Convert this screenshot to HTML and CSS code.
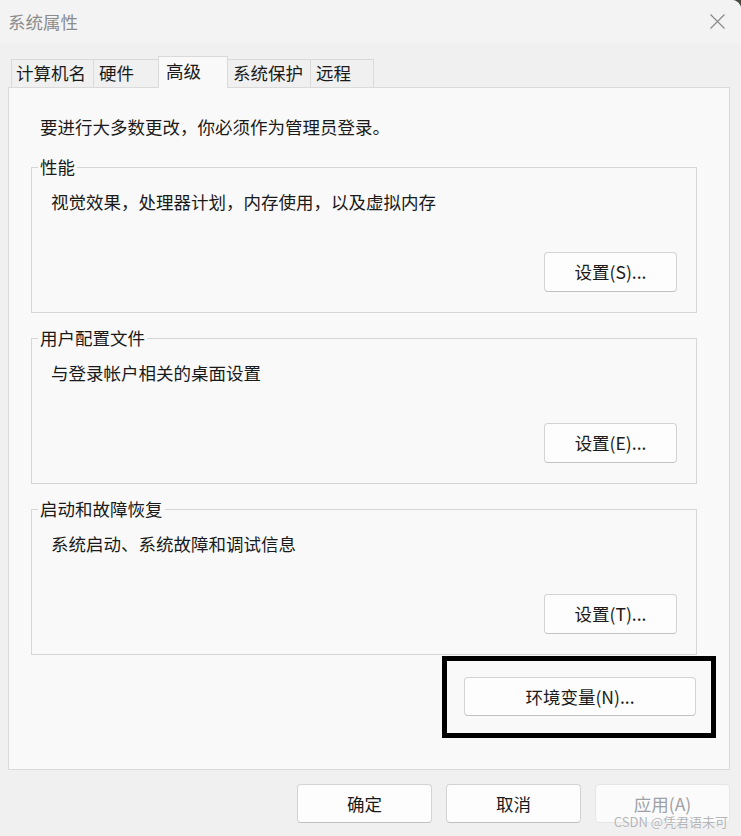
FILE: index.html
```html
<!DOCTYPE html>
<html lang="zh-CN">
  <head>
    <meta charset="UTF-8" />
    <meta name="viewport" content="width=device-width, initial-scale=1.0" />
    <title>系统属性</title>
    <link rel="stylesheet" href="styles.css">
  </head>
  <body>
    <div class="window">
      <div class="titlebar">
        <span class="title">系统属性</span>
        <span class="close">
          <svg width="15" height="15" viewBox="0 0 15 15">
            <path d="M0.5 0.5 L14.5 14.5 M14.5 0.5 L0.5 14.5" stroke="#8a8a8a" stroke-width="1.2" fill="none" />
          </svg>
        </span>
      </div>

      <!-- Tabs -->
      <div class="tabs">
        <div class="tab tab-computer">计算机名</div>
        <div class="tab tab-hardware">硬件</div>
        <div class="tab tab-advanced active">高级</div>
        <div class="tab tab-protect">系统保护</div>
        <div class="tab tab-remote">远程</div>
      </div>

      <div class="panel">
        <p class="intro">要进行大多数更改，你必须作为管理员登录。</p>

        <fieldset class="group">
          <legend>性能</legend>
          <p class="group-desc">视觉效果，处理器计划，内存使用，以及虚拟内存</p>
          <button class="btn group-btn">设置(S)...</button>
        </fieldset>

        <fieldset class="group">
          <legend>用户配置文件</legend>
          <p class="group-desc">与登录帐户相关的桌面设置</p>
          <button class="btn group-btn">设置(E)...</button>
        </fieldset>

        <fieldset class="group">
          <legend>启动和故障恢复</legend>
          <p class="group-desc">系统启动、系统故障和调试信息</p>
          <button class="btn group-btn">设置(T)...</button>
        </fieldset>

        <div class="env-row">
          <div class="env-wrap">
            <button class="btn env-btn">环境变量(N)...</button>
            <span class="highlight"></span>
          </div>
        </div>
      </div>

      <div class="footer">
        <button class="btn footer-btn">确定</button>
        <button class="btn footer-btn">取消</button>
        <button class="btn footer-btn" disabled>应用(A)</button>
      </div>

      <span class="watermark">CSDN @凭君语未可</span>
    </div>
  </body>
</html>
```

FILE: styles.css
```css
body {
  margin: 0;
  padding: 0;
  background-color: #454b40;
  font-family: "Noto Sans CJK SC", "Noto Sans", sans-serif;
  font-size: 17.5px;
  color: #1a1a1a;
  overflow: hidden;
}

.window {
  position: relative;
  width: 741px;
  height: 836px;
  background-color: #f0f0f0;
  border-top-right-radius: 9px;
  overflow: hidden;
}

.titlebar {
  height: 43px;
  background-color: #f3f3f3;
  display: flex;
  align-items: center;
  justify-content: space-between;
  padding: 0 16px 0 8px;
  box-sizing: border-box;
}

.title {
  color: #8c8c8c;
  line-height: 24px;
}

.close {
  display: flex;
  width: 15px;
  height: 15px;
}

/* Tabs */
.tabs {
  display: flex;
  align-items: flex-end;
  height: 31px;
  margin-top: 13px;
  padding-left: 11px;
  position: relative;
  z-index: 1;
}

.tab {
  box-sizing: border-box;
  height: 28px;
  padding-left: 5px;
  line-height: 26px;
  border: 1px solid #dadada;
  border-bottom: none;
  background-color: #f0f0f0;
  white-space: nowrap;
}

.tab + .tab {
  margin-left: -1px;
}

.tab-computer {
  width: 83px;
  padding-left: 4px;
}

.tab-hardware {
  width: 66px;
}

.tab-advanced {
  width: 70px;
}

.tab-protect {
  width: 84px;
}

.tab-remote {
  width: 64px;
}

.tab.active {
  height: 32px;
  margin-bottom: -1px;
  padding-left: 7px;
  padding-top: 1px;
  background-color: #f9f9f9;
  position: relative;
  z-index: 2;
}

/* Main panel */
.panel {
  box-sizing: border-box;
  width: 722px;
  height: 683px;
  margin-left: 8px;
  padding: 27px 32px 0 22px;
  border: 1px solid #dadada;
  background-color: #f9f9f9;
}

.intro {
  margin: 0 0 17px 9px;
  line-height: 24px;
}

.group {
  margin: 0 0 14px 0;
  padding: 12px 19px 20px 19px;
  border: 1px solid #d6d6d6;
  min-width: 0;
}

.group legend {
  padding: 0 2px;
  margin-left: -13px;
  line-height: 22px;
}

.group-desc {
  margin: 0;
  line-height: 24px;
}

.btn {
  font-family: inherit;
  font-size: 17.5px;
  color: #1a1a1a;
  background-color: #fdfdfd;
  border: 1px solid #d3d3d3;
  border-bottom-color: #c2c2c2;
  border-radius: 4px;
  padding: 0;
  line-height: 24px;
  box-sizing: border-box;
  cursor: pointer;
}

.btn:disabled {
  color: #9ea2a6;
  background-color: #fbfbfb;
  border-color: #e6e6e6;
  cursor: default;
}

.group-btn {
  display: block;
  width: 133px;
  height: 40px;
  margin: 38px 0 0 auto;
}

.env-row {
  display: flex;
  justify-content: flex-end;
  margin-top: 22px;
  margin-right: 1px;
}

.env-wrap {
  position: relative;
}

.env-btn {
  display: block;
  width: 232px;
  height: 39px;
}

/* annotation box drawn over the button */
.highlight {
  position: absolute;
  top: -21px;
  bottom: -22px;
  left: -22px;
  right: -20px;
  border: 5px solid #000;
  pointer-events: none;
}

.footer {
  display: flex;
  justify-content: flex-end;
  gap: 14px;
  padding: 14px 11px 0 0;
}

.footer-btn {
  width: 135px;
  height: 39px;
}

.watermark {
  position: absolute;
  right: 13px;
  bottom: 6px;
  font-size: 13px;
  line-height: 16px;
  color: #b3b5b8;
  text-shadow: 0 0 1px #fff;
}
```
